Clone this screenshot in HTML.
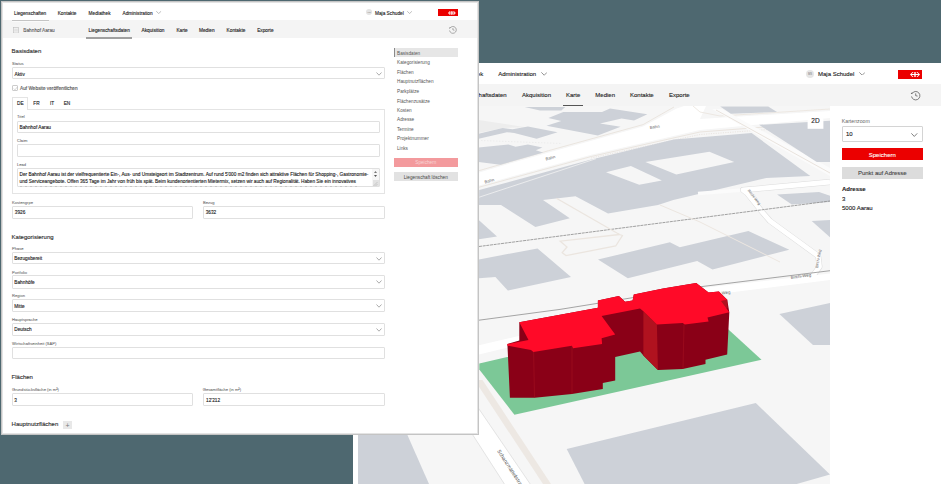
<!DOCTYPE html>
<html><head><meta charset="utf-8">
<style>
html,body{margin:0;padding:0;}
body{width:941px;height:484px;overflow:hidden;position:relative;background:#4e6870;font-family:"Liberation Sans",sans-serif;color:#222;}
.a{position:absolute;white-space:nowrap;line-height:1;}
.box{position:absolute;box-sizing:border-box;}
/* front */
.f{font-size:4.75px;margin-top:1.5px;-webkit-text-stroke:0.12px #222;}
.fl{font-size:4.1px;color:#666;margin-top:0.5px;-webkit-text-stroke:0.05px #666;}
.fh{font-size:6px;color:#333;margin-top:-0.3px;-webkit-text-stroke:0.15px #333;}
.inp{position:absolute;box-sizing:border-box;border:1px solid #e0e0e0;border-radius:1px;background:#fff;}
.chev{position:absolute;width:3px;height:3px;border-right:0.7px solid #777;border-bottom:0.7px solid #777;transform:rotate(45deg);}
.sn{font-size:4.7px;color:#555;margin-top:1.2px;}
.b{font-size:6px;color:#222;margin-top:0px;-webkit-text-stroke:0.12px #222;}
</style></head><body>

<!-- ============ BACK WINDOW ============ -->
<div class="box" style="left:353px;top:63px;width:588px;height:421px;background:#fff;"></div>
<div class="box" style="left:353px;top:84px;width:588px;height:22px;background:#f4f4f4;"></div>
<svg class="box" style="left:0;top:0;" width="941" height="484" viewBox="0 0 941 484">
<defs><clipPath id="mc"><rect x="358" y="106" width="472" height="378"/></clipPath></defs>
<g clip-path="url(#mc)">
<rect x="358" y="106" width="472" height="378" fill="#f6f6f6"/>
<!-- hatched light area -->
<polygon fill="#ededed" points="478.7,119.9 525.8,127.2 502.6,127.9 478.7,133"/>
<line x1="481" y1="140.5" x2="562" y2="143.5" stroke="#e8e8e8" stroke-width="0.7" stroke-dasharray="1.5 1.5"/>
<!-- white roads -->
<polygon fill="#fff" points="479.2,172.4 548.8,152.4 643.1,126.4 676.2,108.7 684,106 706,106 700,119 830,111 830,118 700,130 591.2,154.7 479.2,185.4"/>
<polyline fill="none" stroke="#ece6e0" stroke-width="0.9" points="693,106 700,112 720,116 830,109"/>
<polyline fill="none" stroke="#e9e3dd" stroke-width="0.9" points="479.2,170.6 548.8,150.6 643.1,124.6 674,107"/>
<polyline fill="none" stroke="#e9e3dd" stroke-width="0.9" points="479.2,187.2 591.2,156.5 700,132 830,122"/>
<polyline fill="none" stroke="#e6e0da" stroke-width="0.8" stroke-dasharray="1.2 1.2" points="591,158 700,134.5 830,125"/>
<!-- diagonal light road right -->
<polygon fill="#fbfbfb" points="712,109 722,109 830,168 830,176"/>
<line x1="716" y1="110" x2="830" y2="173" stroke="#e9e3dd" stroke-width="1"/>
<!-- buildings -->
<g fill="#cdd1d8">
<polygon points="524.6,107 565.3,107 561.3,110.5 540,110.5"/>
<polygon points="546.5,125.8 561.3,120.9 548.4,117.9 563.3,111.9 602,111.9 610,108.5 647.4,114.3 634,120.5 621.6,118.5 600,123.6 620.6,126.7 597.8,135.4"/>
<polygon points="478.7,133.7 502.6,127.9 512.7,129.3 527.9,126.4 557.6,132.2 536.6,138.7 514.2,132.9 506.9,132.2 478.7,138.7"/>
<polygon points="478.7,147.4 508.4,144.5 515.6,146.7 527.9,144.5 542.4,147.4 535.9,150.3 543.1,152.5 500.4,164.8 478.7,161.9"/>
<polygon points="720.2,106.5 768.2,106.5 777,112 730.9,113.8"/>
<path fill-rule="evenodd" d="M479.2,190.1 L591.2,159.4 L673.8,139.4 L751.6,133 L810.3,176.1 L766.2,178 L673.3,200 L658,204.9 L608,213.5 L575.5,196.3 L543,200 L569.8,218.3 L535.4,226.9 L501,204.9 L479,204.9 Z M606,172.3 L630.9,166.1 L661.9,180.6 L639.2,184.7 Z M645.4,162 L709.4,151.7 L734.2,162 L676.3,174.4 Z"/>
<polygon points="759,124.8 830,120.7 830,162 816.8,162"/>
</g><polyline fill="none" stroke="#f2f2f2" stroke-width="0.8" points="479.2,197.2 596,158.7"/><g fill="#cdd1d8">
<polygon points="479,220.2 497,236.4 479,239.3"/>
<polygon points="479,259.4 537.5,248.4 571,277 507.8,290.6 495.4,277 479,278.2"/>
<polygon points="598,259.6 669.9,242.2 679.8,247.2 748.4,231 789.3,249.7 712.5,269.5 697.2,261 627.8,278.2"/>
<polygon points="811.7,221 830,220 830,237.3"/>
<polygon points="777,194.5 819,192 830,195.7 830,202 791.8,204.4"/>
<polygon points="779.4,314 830,303 830,345 813,345"/>
<polygon points="566.7,448.9 755.8,403 830,474.6 796.7,484 584.6,484"/>
<polygon points="357.6,434.8 407.3,434.8 429,484 357.6,484"/>
</g>
<!-- Birchi-Weg -->
<polyline fill="none" stroke="#fbfbfb" stroke-width="3.5" points="743,190 698,193.5"/>
<polyline fill="none" stroke="#dcdcdc" stroke-width="5.8" stroke-linejoin="round" points="830,182 743,190 747,193 763,213 770,221 818.2,256 819.5,266.7 811.5,278"/>
<polyline fill="none" stroke="#fff" stroke-width="4.8" stroke-linejoin="round" points="830,182 743,190 747,193 763,213 770,221 818.2,256 819.5,266.7 811.5,278"/>
<polygon fill="#fff" points="479,345.3 519,336 700,288.2 830,273.4 830,280.1 700,296.2 519,344.8 479,354.4"/>

<!-- rail lines -->
<line x1="479" y1="246.5" x2="830" y2="201" stroke="#8a8a8a" stroke-width="0.8" stroke-dasharray="3 0.7"/>
<polyline fill="none" points="479,320.2 560,309.4 700,286.8 830,270.7" stroke="#8f8f8f" stroke-width="0.8"/>
<!-- path outline -->
<polyline fill="none" stroke="#ece6e0" stroke-width="1" points="660,205 700,222 780,262"/>
<polyline fill="none" stroke="#ebe5df" stroke-width="1.3" points="556.4,198.2 619.5,234.5 622.4,235.5 615.7,246 566,255.6 562.2,252.7 567,247 560.2,241.2 619.5,234.5"/>
<!-- diagonal road bottom-left -->
<polygon fill="#fff" points="437.4,380 459.2,380 530.2,484 504.4,484"/>
<line x1="437.4" y1="380" x2="504.4" y2="484" stroke="#dadada" stroke-width="0.7"/>
<line x1="459.2" y1="380" x2="530.2" y2="484" stroke="#dadada" stroke-width="0.7"/>
<polygon fill="#ede8e3" points="474.5,380 482.5,380 551,484 543,484"/>
<!-- green -->
<polygon fill="#7cc897" points="479.3,363.5 507.2,357 726.8,328 761.5,359.8 514.4,414.7 479.3,369.5"/>
<!-- red building -->
<polygon fill="#8a0017" points="507.4,344 519.3,340.5 519.3,322.2 597.9,307.8 597.9,300.4 618.9,296.1 625.1,301.8 632.6,300.4 633.8,294.6 663.1,288.4 696.2,282.9 708.6,292.6 718.9,291.5 727.2,299.8 729.3,312.2 727.2,354.6 705.5,359.8 705.5,363.9 682.7,369.1 657.9,370.1 643.4,355.6 640,351.4 615.2,356.9 615.2,380.4 602.8,382.9 602.8,389.1 571.9,394 534.7,397.7 509.9,397.7"/>
<polygon fill="#b0121f" points="643.4,311.2 656.9,324.6 657.9,370.1 643.4,355.6"/>
<polygon fill="#b0121f" points="718.5,301.5 727.2,299.6 727.6,308.3 721,308.8"/>
<line x1="533.6" y1="351.5" x2="534.5" y2="397.5" stroke="#a31020" stroke-width="0.6"/>
<line x1="572" y1="346" x2="572" y2="394" stroke="#a31020" stroke-width="0.6"/>
<line x1="684" y1="324.5" x2="683" y2="369" stroke="#a31020" stroke-width="0.6"/>
<polygon fill="#ff0a28" points="519.3,322.2 597.9,307.8 597.9,300.4 618.9,296.1 625.1,301.8 632.6,300.4 633.8,294.6 663.1,288.4 696.2,282.9 708.6,292.6 718.9,291.5 727.2,299.8 721,301 729.3,312.2 707.5,317.4 708.6,321.5 684.8,324.6 682.7,323 656.9,324.6 643.4,311.2 640,308.5 601.6,316 615.2,334.6 601.6,338.3 602.1,344 573.1,348.2 571.9,345.7 533.4,351.9 531,349.9 507.4,345.7 507.4,344 528.5,340"/>
</g>
<g font-family="Liberation Sans" fill="#666" font-size="4.2">
<text transform="translate(485,183.5) rotate(-16)">Bahn</text>
<text transform="translate(546,160.5) rotate(-15)">Bahn</text>
<text transform="translate(650,129) rotate(-8)">Bahn</text>
<text transform="translate(722,294.5) rotate(-8)">Weg</text>
<text transform="translate(791,279) rotate(-8)">Birchi-Weg</text>
<text transform="translate(818,268) rotate(-80)" font-size="3.8">Birchi-Weg</text>
<text transform="translate(747.5,190.5) rotate(52)" font-size="3.8">Birchi-Weg</text>
<text transform="translate(497,451) rotate(57)" font-size="5.2" fill="#555">Schanzmättelistrasse</text>
</g>
<!-- 2D button -->
<rect x="807.6" y="112.6" width="15.8" height="16.2" fill="#fff"/>
</svg>
<div class="a" style="left:807.6px;top:118px;width:15.8px;text-align:center;font-size:6.5px;color:#222;-webkit-text-stroke:0.12px #222;">2D</div>


<!-- back header -->
<div class="a b" style="left:455.6px;top:70.8px;">Mediathek</div>
<div class="a b" style="left:498.2px;top:70.8px;">Administration</div>
<svg class="box" style="left:540.7px;top:72.2px;" width="6.4" height="3.6" viewBox="0 0 6.4 3.6"><polyline points="0.35,0.35 3.2,3.25 6.050000000000001,0.35" fill="none" stroke="#666" stroke-width="0.7"/></svg>
<div class="box" style="left:805.8px;top:69.6px;width:8.5px;height:8.5px;border-radius:50%;background:#e6e6e6;"></div><div class="a" style="left:805.8px;width:8.5px;text-align:center;top:72.6px;font-size:2.8px;color:#777;">MS</div>
<div class="a b" style="left:818px;top:70.5px;">Maja Schudel</div>
<svg class="box" style="left:858.5px;top:71.8px;" width="6.4" height="3.6" viewBox="0 0 6.4 3.6"><polyline points="0.35,0.35 3.2,3.25 6.050000000000001,0.35" fill="none" stroke="#666" stroke-width="0.7"/></svg>
<div class="box" style="left:898px;top:69.8px;width:24.2px;height:9px;background:#eb0000;"></div><svg class="box" style="left:909.9px;top:71.8px;" width="10" height="5.1" viewBox="0 0 10 5" preserveAspectRatio="none"><polygon points="0,2.5 2.5,0 3.6,0 1.6,2 4.3,2 4.3,0 5.7,0 5.7,2 8.4,2 6.4,0 7.5,0 10,2.5 7.5,5 6.4,5 8.4,3 5.7,3 5.7,5 4.3,5 4.3,3 1.6,3 3.6,5 2.5,5" fill="#fff"/></svg><svg class="box" style="left:909.70px;top:89.60px;" width="11.40" height="11.40"><path d="M2.06,3.60 A4.2,4.2 0 1 1 1.56,6.43" fill="none" stroke="#555" stroke-width="0.75"/><path d="M0.94,3.40 L2.06,3.60 L2.16,2.39" fill="none" stroke="#555" stroke-width="0.75"/><path d="M5.70,3.39 L5.70,5.70 L7.59,6.12" fill="none" stroke="#555" stroke-width="0.75"/></svg>
<!-- back subnav -->
<div class="a b" style="left:454.6px;top:92.2px;">Liegenschaftsdaten</div>
<div class="a b" style="left:522px;top:92.2px;">Akquisition</div>
<div class="a b" style="left:566px;top:92.2px;">Karte</div>
<div class="box" style="left:563px;top:104.8px;width:20px;height:1.2px;background:#555;"></div>
<div class="a b" style="left:595.3px;top:92.2px;">Medien</div>
<div class="a b" style="left:630px;top:92.2px;">Kontakte</div>
<div class="a b" style="left:669px;top:92.2px;">Exporte</div>

<!-- right panel -->
<div class="box" style="left:830px;top:106px;width:111px;height:378px;background:#fff;"></div>
<div class="a" style="left:841.8px;top:119.4px;font-size:5.2px;color:#666;">Kartenzoom</div>
<div class="inp" style="left:842px;top:126px;width:80.6px;height:16.3px;border-color:#d4d4d4;"></div>
<div class="a b" style="left:846px;top:131.3px;">10</div>
<svg class="box" style="left:911.4px;top:133px;" width="6.6" height="3.8" viewBox="0 0 6.6 3.8"><polyline points="0.375,0.375 3.3,3.425 6.225,0.375" fill="none" stroke="#555" stroke-width="0.75"/></svg>
<div class="box" style="left:842px;top:148.4px;width:80.6px;height:12.1px;background:#eb0000;"></div>
<div class="a b" style="left:842px;width:80.6px;text-align:center;top:152.1px;color:#fff;-webkit-text-stroke:0.1px #fff;">Speichern</div>
<div class="box" style="left:842px;top:167px;width:80.6px;height:11.8px;background:#dcdcdc;"></div>
<div class="a b" style="left:842px;width:80.6px;text-align:center;top:169.9px;color:#444;-webkit-text-stroke:0.1px #444;">Punkt auf Adresse</div>
<div class="a b" style="left:842px;top:186.2px;font-weight:bold;">Adresse</div>
<div class="a b" style="left:842px;top:195.9px;">3</div>
<div class="a b" style="left:842px;top:205.1px;">5000 Aarau</div>

<!-- back window left strip below front window -->
<div class="box" style="left:353px;top:435px;width:5px;height:49px;background:#fff;"></div>

<!-- ============ FRONT WINDOW ============ -->
<div class="box" style="left:1px;top:1px;width:478px;height:434px;background:#fff;border:1px solid #c4c4c4;box-shadow:inset 0 0 0 1px #e4e4e4;"></div>
<!-- header -->
<div class="a f" style="left:14px;top:10.7px;">Liegenschaften</div>
<div class="a f" style="left:57.7px;top:10.7px;">Kontakte</div>
<div class="a f" style="left:88.6px;top:10.7px;">Mediathek</div>
<div class="a f" style="left:122.5px;top:10.7px;">Administration</div>
<svg class="box" style="left:156.3px;top:11px;" width="5.4" height="2.8" viewBox="0 0 5.4 2.8"><polyline points="0.275,0.275 2.7,2.525 5.125,0.275" fill="none" stroke="#888" stroke-width="0.55"/></svg>
<div class="box" style="left:366.2px;top:9.1px;width:6px;height:6px;border-radius:50%;background:#e4e4e4;"></div><div class="a" style="left:366.2px;width:6px;text-align:center;top:11.2px;font-size:2.2px;color:#888;">MS</div>
<div class="a f" style="left:375px;top:10.6px;">Maja Schudel</div>
<svg class="box" style="left:407.2px;top:11px;" width="5.2" height="2.8" viewBox="0 0 5.2 2.8"><polyline points="0.275,0.275 2.6,2.525 4.925,0.275" fill="none" stroke="#888" stroke-width="0.55"/></svg>
<div class="box" style="left:438.4px;top:9.2px;width:19.2px;height:7.1px;background:#eb0000;"></div><svg class="box" style="left:448px;top:10.7px;" width="7.8" height="4" viewBox="0 0 10 5" preserveAspectRatio="none"><polygon points="0,2.5 2.5,0 3.6,0 1.6,2 4.3,2 4.3,0 5.7,0 5.7,2 8.4,2 6.4,0 7.5,0 10,2.5 7.5,5 6.4,5 8.4,3 5.7,3 5.7,5 4.3,5 4.3,3 1.6,3 3.6,5 2.5,5" fill="#fff"/></svg>
<!-- subnav -->
<div class="box" style="left:3px;top:20px;width:474px;height:18px;background:#f4f4f4;"></div><svg class="box" style="left:447.60px;top:24.90px;" width="9.80" height="9.80"><path d="M1.96,3.20 A3.4,3.4 0 1 1 1.55,5.49" fill="none" stroke="#777" stroke-width="0.6"/><path d="M1.05,3.00 L1.96,3.20 L2.06,2.22" fill="none" stroke="#777" stroke-width="0.6"/><path d="M4.90,3.03 L4.90,4.90 L6.43,5.24" fill="none" stroke="#777" stroke-width="0.6"/></svg>
<div class="box" style="left:12px;top:19.6px;width:37px;height:1.3px;background:#c4c4c4;"></div><div class="box" style="left:12px;top:20.9px;width:37px;height:1.3px;background:#fafafa;"></div>
<svg class="box" style="left:12.8px;top:26.8px;" width="6" height="6.5"><rect x="0.5" y="0.5" width="5" height="5.5" fill="none" stroke="#bbb" stroke-width="0.6"/><path d="M2,1.5 V5 M4,1.5 V5 M1.5,3 H4.5" stroke="#ccc" stroke-width="0.5"/></svg><div class="a f" style="left:23.3px;top:27.3px;color:#888;">Bahnhof Aarau</div>
<div class="a f" style="left:88.6px;top:27px;">Liegenschaftsdaten</div>
<div class="box" style="left:86.3px;top:37.2px;width:46px;height:1.4px;background:#a0a0a0;"></div>
<div class="a f" style="left:141.5px;top:27px;">Akquisition</div>
<div class="a f" style="left:176.4px;top:27px;">Karte</div>
<div class="a f" style="left:199px;top:27px;">Medien</div>
<div class="a f" style="left:226.6px;top:27px;">Kontakte</div>
<div class="a f" style="left:257.2px;top:27px;">Exporte</div>

<!-- content -->
<div class="a fh" style="left:11.6px;top:48.5px;">Basisdaten</div>
<div class="a fl" style="left:12px;top:61.2px;">Status</div>
<div class="inp" style="left:11.5px;top:67px;width:373.5px;height:12.2px;"></div>
<div class="a f" style="left:14.5px;top:71.4px;">Aktiv</div>
<svg class="box" style="left:375.5px;top:72px;" width="6" height="4" viewBox="0 0 6 4"><polyline points="0.5,0.5 3,3.2 5.5,0.5" fill="none" stroke="#888" stroke-width="0.7"/></svg>
<div class="box" style="left:11.6px;top:84.6px;width:6px;height:6.6px;border:0.8px solid #ccc;border-radius:1px;"></div>
<svg class="box" style="left:12.5px;top:85.5px;" width="5" height="5"><polyline points="0.8,2.6 2,3.8 4.3,1" fill="none" stroke="#bbb" stroke-width="0.6"/></svg><div class="a f" style="left:20px;top:85.7px;color:#777;">Auf Website veröffentlichen</div>
<!-- tabs -->
<div class="box" style="left:11.5px;top:109px;width:373.5px;height:85px;border:1px solid #e4e4e4;"></div>
<div class="box" style="left:11.5px;top:96.5px;width:16.8px;height:13.5px;border:1px solid #e4e4e4;border-bottom:none;background:#fff;"></div>
<div class="a f" style="left:17px;top:100.4px;">DE</div>
<div class="a f" style="left:33.3px;top:100.4px;">FR</div>
<div class="a f" style="left:50px;top:100.4px;">IT</div>
<div class="a f" style="left:63.7px;top:100.4px;">EN</div>
<div class="a fl" style="left:17px;top:114.7px;">Titel</div>
<div class="inp" style="left:17px;top:120.5px;width:363px;height:12.5px;"></div>
<div class="a f" style="left:19.5px;top:124.4px;">Bahnhof Aarau</div>
<div class="a fl" style="left:17px;top:138.4px;">Claim</div>
<div class="inp" style="left:17px;top:143.7px;width:363px;height:13.3px;"></div>
<div class="a fl" style="left:17px;top:162.4px;">Lead</div>
<div class="inp" style="left:17px;top:167.5px;width:363px;height:19.5px;overflow:hidden;"></div>
<div class="a f" style="left:19.5px;top:171.8px;">Der Bahnhof Aarau ist der vielfrequentierte Ein-, Aus- und Umsteigeort im Stadtzentrum. Auf rund 5'000 m2 finden sich attraktive Flächen für Shopping-, Gastronomie-</div>
<div class="a f" style="left:19.5px;top:178.2px;">und Serviceangebote. Offen 365 Tage im Jahr von früh bis spät. Beim kundenorientierten Mietermix, setzen wir auch auf Regionalität. Haben Sie ein innovatives</div>
<div class="box" style="left:19.5px;top:185.6px;width:340px;height:1.2px;background:repeating-linear-gradient(90deg,#bbb 0 2px,transparent 2px 5px);opacity:0.7"></div>
<div class="box" style="left:372px;top:168.5px;width:6.5px;height:17.5px;background:#f6f6f6;"></div><div class="box" style="left:372.5px;top:179.5px;width:6px;height:6.5px;background:#e2e2e2;"></div>
<svg class="box" style="left:373px;top:169.5px;" width="5" height="17" viewBox="0 0 5 17"><polygon points="2.5,1 4,3 1,3" fill="#777"/><polygon points="2.5,7 4,5 1,5" fill="#555"/><path d="M4.5,12 L0.5,16 M4.5,14 L2.5,16" stroke="#aaa" stroke-width="0.5"/></svg>
<div class="a fl" style="left:12px;top:200.5px;">Kostengrpe</div>
<div class="inp" style="left:11.5px;top:205.5px;width:181.7px;height:13px;"></div>
<div class="a f" style="left:14.8px;top:209.4px;">3926</div>
<div class="a fl" style="left:203px;top:200.3px;">Bezug</div>
<div class="inp" style="left:202.5px;top:205.5px;width:182.5px;height:13px;"></div>
<div class="a f" style="left:205.7px;top:209.3px;">3632</div>

<div class="a fh" style="left:11.6px;top:233.9px;">Kategorisierung</div>
<div class="a fl" style="left:12px;top:246.2px;">Phase</div>
<div class="inp" style="left:11.5px;top:251.7px;width:373.5px;height:12.8px;"></div>
<div class="a f" style="left:14.3px;top:255.9px;">Bezugsbereit</div>
<div class="a fl" style="left:12px;top:270.2px;">Portfolio</div>
<div class="inp" style="left:11.5px;top:275.4px;width:373.5px;height:13.2px;"></div>
<div class="a f" style="left:14.3px;top:279px;">Bahnhöfe</div>
<div class="a fl" style="left:12px;top:293.8px;">Region</div>
<div class="inp" style="left:11.5px;top:299.3px;width:373.5px;height:12.6px;"></div>
<div class="a f" style="left:14.3px;top:303.4px;">Mitte</div>
<div class="a fl" style="left:12px;top:317.4px;">Hauptsprache</div>
<div class="inp" style="left:11.5px;top:322.6px;width:373.5px;height:13.1px;"></div>
<div class="a f" style="left:14.3px;top:326.6px;">Deutsch</div>
<div class="a fl" style="left:12px;top:341px;">Wirtschaftseinheit (SAP)</div>
<div class="inp" style="left:11.5px;top:346.6px;width:373.5px;height:12.6px;"></div>
<svg class="box" style="left:375.5px;top:256.5px;" width="6" height="4" viewBox="0 0 6 4"><polyline points="0.5,0.5 3,3.2 5.5,0.5" fill="none" stroke="#888" stroke-width="0.7"/></svg>
<svg class="box" style="left:375.5px;top:280.2px;" width="6" height="4" viewBox="0 0 6 4"><polyline points="0.5,0.5 3,3.2 5.5,0.5" fill="none" stroke="#888" stroke-width="0.7"/></svg>
<svg class="box" style="left:375.5px;top:304px;" width="6" height="4" viewBox="0 0 6 4"><polyline points="0.5,0.5 3,3.2 5.5,0.5" fill="none" stroke="#888" stroke-width="0.7"/></svg>
<svg class="box" style="left:375.5px;top:327.5px;" width="6" height="4" viewBox="0 0 6 4"><polyline points="0.5,0.5 3,3.2 5.5,0.5" fill="none" stroke="#888" stroke-width="0.7"/></svg>

<div class="a fh" style="left:11.6px;top:374.5px;">Flächen</div>
<div class="a fl" style="left:12px;top:387.4px;">Grundstücksfläche (in m²)</div>
<div class="inp" style="left:11.5px;top:393px;width:181.7px;height:13px;"></div>
<div class="a f" style="left:14.3px;top:397.4px;">3</div>
<div class="a fl" style="left:202.8px;top:387.2px;">Gesamtfläche (in m²)</div>
<div class="inp" style="left:202.5px;top:393px;width:182.5px;height:13px;"></div>
<div class="a f" style="left:206px;top:397.2px;">12'212</div>
<div class="a fh" style="left:11.6px;top:421px;">Hauptnutzflächen</div>
<div class="box" style="left:62.8px;top:420.5px;width:9.3px;height:8.5px;background:#e8e8e8;"></div>
<div class="a" style="left:62.8px;width:9.3px;text-align:center;top:421.6px;font-size:7px;color:#777;">+</div>

<!-- sidebar -->
<div class="box" style="left:394px;top:48px;width:63.5px;height:8.8px;background:#e6e6e6;border-left:0.9px solid #8a8a8a;"></div>
<div class="a sn" style="left:397px;top:50.8px;">Basisdaten</div>
<div class="a sn" style="left:397px;top:59.9px;">Kategorisierung</div>
<div class="a sn" style="left:397px;top:69.6px;">Flächen</div>
<div class="a sn" style="left:397px;top:79.3px;">Hauptnutzflächen</div>
<div class="a sn" style="left:397px;top:89.2px;">Parkplätze</div>
<div class="a sn" style="left:397px;top:98.6px;">Flächenzusätze</div>
<div class="a sn" style="left:397px;top:107.8px;">Kosten</div>
<div class="a sn" style="left:397px;top:117.1px;">Adresse</div>
<div class="a sn" style="left:397px;top:126.7px;">Termine</div>
<div class="a sn" style="left:397px;top:136.2px;">Projektnummer</div>
<div class="a sn" style="left:397px;top:145.9px;">Links</div>
<div class="box" style="left:394px;top:158px;width:63.7px;height:8.5px;background:#f39a9d;"></div>
<div class="a sn" style="left:394px;width:63.7px;text-align:center;top:160.2px;color:#f8d6d6;">Speichern</div>
<div class="box" style="left:394px;top:172px;width:63.5px;height:9.2px;background:#e2e2e2;"></div>
<div class="a sn" style="left:394px;width:63.5px;text-align:center;top:174.6px;color:#444;">Liegenschaft löschen</div>

</body></html>
